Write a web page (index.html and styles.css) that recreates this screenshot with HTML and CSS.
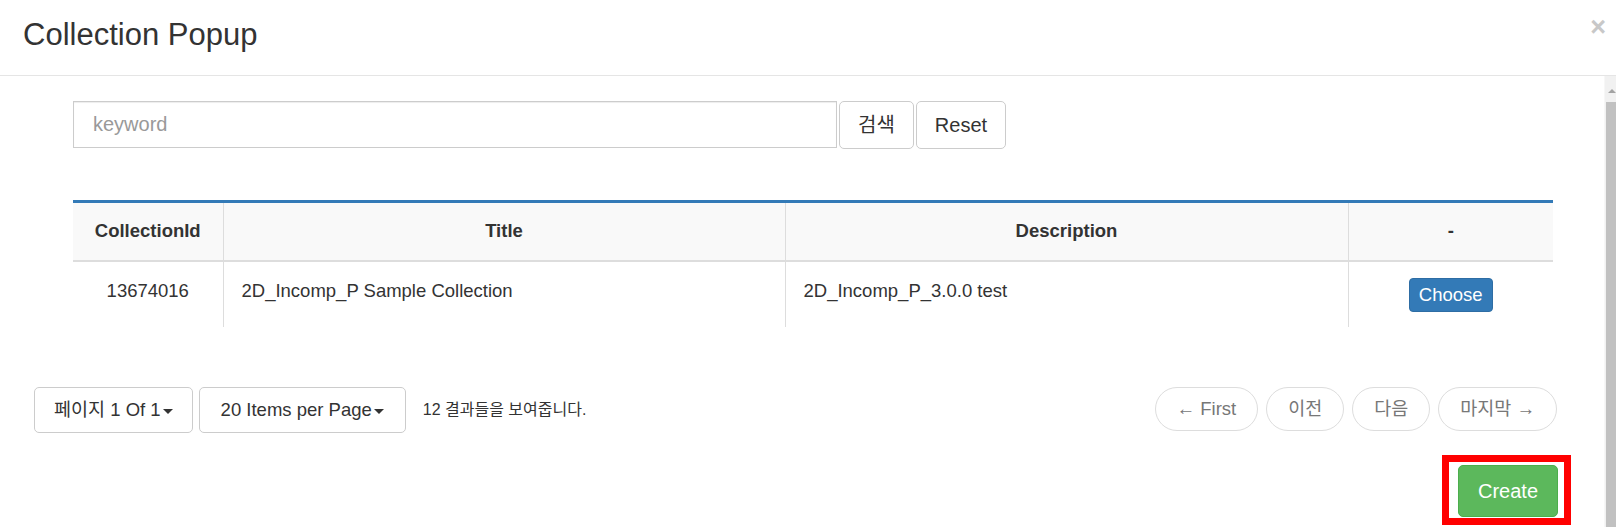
FILE: index.html
```html
<!DOCTYPE html>
<html lang="ko">
<head>
<meta charset="utf-8">
<title>Collection Popup</title>
<link rel="stylesheet" href="styles.css">
</head>
<body>
<div class="modal">
  <div class="modal-header">
    <h4 class="modal-title">Collection Popup</h4>
    <span class="close">&times;</span>
  </div>
  <div class="modal-main">
    <div class="modal-body">
      <div class="search">
        <input class="search-input" type="text" placeholder="keyword">
        <button class="btn btn-search">검색</button>
        <button class="btn btn-search">Reset</button>
      </div>
      <table class="grid">
        <colgroup>
          <col class="c-id"><col class="c-title"><col class="c-desc"><col class="c-act">
        </colgroup>
        <thead>
          <tr><th>CollectionId</th><th>Title</th><th>Description</th><th>-</th></tr>
        </thead>
        <tbody>
          <tr>
            <td class="center">13674016</td>
            <td>2D_Incomp_P Sample Collection</td>
            <td>2D_Incomp_P_3.0.0 test</td>
            <td class="center"><button class="btn btn-choose">Choose</button></td>
          </tr>
        </tbody>
      </table>
      <div class="paging">
        <div class="paging-left">
          <button class="btn btn-drop">페이지 1 Of 1<span class="caret"></span></button>
          <button class="btn btn-drop btn-drop-wide">20 Items per Page<span class="caret"></span></button>
          <span class="result-text">12 결과들을 보여줍니다.</span>
        </div>
        <ul class="pager">
          <li><a>&larr; First</a></li>
          <li><a>이전</a></li>
          <li><a>다음</a></li>
          <li><a>마지막 &rarr;</a></li>
        </ul>
      </div>
      <div class="actions">
        <span class="highlight"><button class="btn btn-create">Create</button></span>
      </div>
    </div>
    <div class="scrollbar">
      <div class="scroll-arrow"><span class="arrow-up"></span></div>
      <div class="scroll-thumb"></div>
    </div>
  </div>
</div>
</body>
</html>
```

FILE: styles.css
```css
* { box-sizing: border-box; }
html, body { margin: 0; padding: 0; background: #fff; }
body {
  font-family: "Liberation Sans", Arial, "Noto Sans CJK KR", sans-serif;
  font-size: 18.5px;
  line-height: 26px;
  color: #333;
}
.modal {
  width: 1616px;
  height: 527px;
  overflow: hidden;
  display: flex;
  flex-direction: column;
}
.modal-header {
  height: 76px;
  flex: none;
  border-bottom: 1px solid #e5e5e5;
  display: flex;
  justify-content: space-between;
  align-items: flex-start;
  padding: 0 10px 0 23px;
}
.modal-title {
  margin: 18px 0 0;
  font-size: 31px;
  font-weight: normal;
  line-height: 34px;
  color: #333;
}
.close {
  margin-top: 14px;
  font-size: 27px;
  line-height: 27px;
  font-weight: bold;
  color: #c8c8c8;
}
.modal-main {
  flex: 1;
  display: flex;
  min-height: 0;
}
.modal-body {
  flex: 1;
  padding-top: 25px;
}
.scrollbar {
  width: 12px;
  flex: none;
  background: #f1f1f1;
  border-left: 1px solid #f7f7f7;
  display: flex;
  flex-direction: column;
}
.scroll-arrow {
  height: 26px;
  display: flex;
  justify-content: center;
  align-items: flex-end;
  padding-bottom: 9px;
  padding-left: 2px;
}
.arrow-up {
  width: 0; height: 0;
  border-left: 4px solid transparent;
  border-right: 4px solid transparent;
  border-bottom: 4px solid #a3a3a3;
}
.scroll-thumb {
  flex: 1;
  margin-left: 1px;
  background: #c1c1c1;
}
.btn {
  font-family: inherit;
  font-size: 18.5px;
  line-height: 26px;
  color: #333;
  background: #fff;
  border: 1px solid #ccc;
  border-radius: 5px;
  cursor: pointer;
  margin: 0;
}
.search {
  display: flex;
  gap: 2px;
  align-items: flex-start;
  margin-left: 73px;
}
.search-input {
  width: 764px;
  height: 47px;
  border: 1px solid #ccc;
  border-radius: 0;
  padding: 0 19px;
  font-family: inherit;
  font-size: 20px;
  color: #555;
  box-shadow: inset 0 1px 1px rgba(0,0,0,.075);
}
.search-input::placeholder { color: #999; }
.btn-search {
  height: 48px;
  font-size: 20px;
  padding: 0 18px;
}
.grid {
  margin: 51px 0 0 73px;
  width: 1480px;
  border-collapse: collapse;
  table-layout: fixed;
}
.c-id { width: 150px; }
.c-title { width: 562px; }
.c-desc { width: 563px; }
.c-act { width: 205px; }
.grid thead tr { border-top: 3px solid #337ab7; }
.grid th {
  background: #f9f9f9;
  font-weight: bold;
  text-align: center;
  padding: 15px 18px 16px;
  border-bottom: 2px solid #ddd;
}
.grid th + th, .grid td + td { border-left: 1px solid #ddd; }
.grid td {
  padding: 16px 18px 15px;
  vertical-align: top;
  text-align: left;
}
.grid td.center { text-align: center; }
.btn-choose {
  background: #337ab7;
  border-color: #2e6da4;
  color: #fff;
  padding: 3px 9px;
  border-radius: 4px;
  vertical-align: top;
}
.paging {
  display: flex;
  justify-content: space-between;
  align-items: flex-start;
  margin: 60px 47px 0 34px;
}
.paging-left {
  display: flex;
  align-items: center;
  gap: 6px;
}
.btn-drop {
  height: 46px;
  padding: 0 19px;
}
.btn-drop-wide { padding: 0 21px; }
.caret {
  display: inline-block;
  width: 0; height: 0;
  margin-left: 2px;
  vertical-align: middle;
  border-top: 5px solid #333;
  border-left: 5px solid transparent;
  border-right: 5px solid transparent;
}
.result-text {
  margin-left: 11px;
  font-size: 16px;
}
.pager {
  display: flex;
  gap: 8px;
  list-style: none;
  margin: 0;
  padding: 0;
}
.pager a {
  display: block;
  height: 44px;
  padding: 8px 21px;
  border: 1px solid #ddd;
  border-radius: 22px;
  color: #777;
  background: #fff;
}
.actions {
  display: flex;
  justify-content: flex-end;
  margin: 32px 46px 0 0;
}
.highlight { position: relative; display: inline-block; }
.highlight::after {
  content: "";
  position: absolute;
  top: -10px; right: -13px; bottom: -8px; left: -16px;
  border: 7px solid #ff0000;
  pointer-events: none;
}
.btn-create {
  display: block;
  background: #5cb85c;
  border-color: #4cae4c;
  color: #fff;
  font-size: 20px;
  padding: 12px 19px;
  border-radius: 5px;
}
```
